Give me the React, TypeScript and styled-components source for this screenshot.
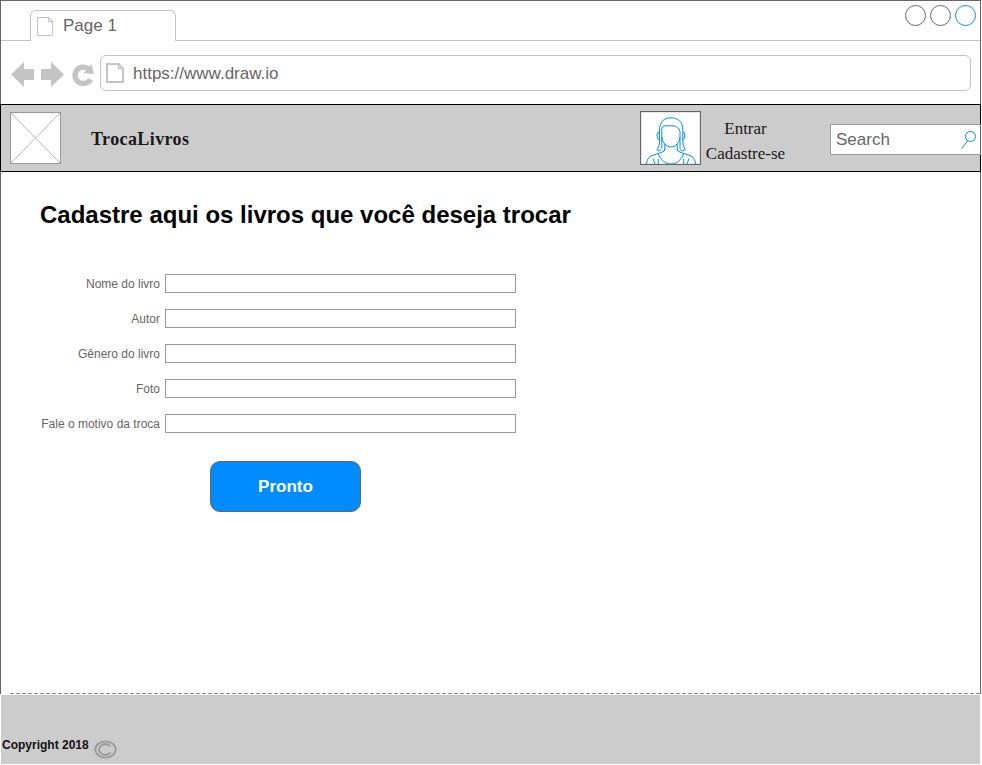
import React from "react";
import styled, { createGlobalStyle } from "styled-components";

const GlobalStyle = createGlobalStyle`
  * { box-sizing: border-box; }
  body {
    margin: 0;
    background: #fff;
    font-family: "Liberation Sans", Arial, sans-serif;
    overflow: hidden;
  }
`;

const Page = styled.div`
  width: 982px;
  height: 765px;
  overflow: hidden;
`;

const Frame = styled.div`
  width: 981px;
  height: 694px;
  border: 1px solid #666;
  border-bottom: 0;
  display: flex;
  flex-direction: column;
`;

const TabStrip = styled.div`
  display: flex;
  align-items: flex-end;
  height: 40px;
  flex: none;
`;

const StripLine = styled.div<{ $width?: number }>`
  ${(p) => (p.$width ? `width: ${p.$width}px;` : "flex: 1;")}
  height: 40px;
  border-bottom: 1px solid #c4c4c4;
`;

const Tab = styled.div`
  display: flex;
  align-items: center;
  width: 146px;
  height: 31px;
  border: 1px solid #c4c4c4;
  border-bottom: 0;
  border-radius: 6px 6px 0 0;
  padding: 0 0 1px 6px;
  gap: 8px;
  color: #666;
  font-size: 17px;
  svg { margin-top: 3px; }
`;

const WindowButtons = styled(StripLine)`
  display: flex;
  justify-content: flex-end;
  gap: 3px;
  padding: 3px 4px 0 0;
`;

const Toolbar = styled.div`
  display: flex;
  height: 63px;
  flex: none;
  padding: 14px 9px 0 9px;
`;

const NavIcons = styled.div`
  width: 90px;
  height: 36px;
`;

const AddressBar = styled.div`
  display: flex;
  align-items: center;
  gap: 9px;
  flex: 1;
  height: 36px;
  border: 1px solid #c4c4c4;
  border-radius: 6px;
  padding: 2px 0 0 5px;
  color: #666;
  font-size: 17px;
  svg { margin-bottom: 2px; }
`;

const SiteHeader = styled.header`
  display: flex;
  flex: none;
  width: 981px;
  height: 68px;
  margin-left: -1px;
  border: 1px solid #000;
  background: #ccc;
  font-family: "Liberation Serif", "Times New Roman", serif;
  color: #1a1a1a;
`;

const Logo = styled.svg`
  flex: none;
  margin: 7px 0 0 9px;
`;

const Brand = styled.div`
  width: 550px;
  flex: none;
  padding-left: 30px;
  font-size: 18px;
  font-weight: bold;
  line-height: 68px;
  letter-spacing: 0.4px;
`;

const Avatar = styled.svg`
  flex: none;
  margin: 6px 0 0 29px;
`;

const Account = styled.nav`
  flex: none;
  width: 90px;
  padding: 11px 1px 0 0;
  display: flex;
  flex-direction: column;
  align-items: center;
  font-size: 17px;
  line-height: 25px;
`;

const SearchBox = styled.div`
  display: flex;
  align-items: center;
  justify-content: space-between;
  flex: none;
  width: 151px;
  height: 31px;
  margin: 19px 0 0 39px;
  border: 1px solid #999;
  border-right-color: #666;
  background: #fff;
  padding: 0 3px 0 5px;
  color: #666;
  font: 17px "Liberation Sans", Arial, sans-serif;
`;

const Main = styled.main`
  flex: 1;
  padding: 28px 0 0 39px;
`;

const Title = styled.h1`
  margin: 0 0 45px;
  color: #000;
  font-size: 24px;
  line-height: 29px;
  white-space: nowrap;
`;

const Form = styled.div`
  display: flex;
  flex-direction: column;
  gap: 16px;
`;

const Field = styled.label`
  display: grid;
  grid-template-columns: 120px 351px;
  grid-template-rows: 19px;
  column-gap: 5px;
  height: 19px;
  color: #666;
  font-size: 12px;
  line-height: 21px;
  text-align: right;
  white-space: nowrap;
`;

const Input = styled.span`
  border: 1px solid #999;
  background: #fff;
`;

const Submit = styled.button`
  display: block;
  width: 151px;
  height: 51px;
  margin: 28px 0 0 170px;
  border: 1px solid #666;
  border-radius: 10px;
  background: #008cff;
  color: #fff;
  font: bold 17px "Liberation Sans", Arial, sans-serif;
  padding: 0;
`;

const Divider = styled.div`
  height: 1px;
  margin-left: 9px;
  background: repeating-linear-gradient(90deg, #aaa 0 1px, #777 1px 3px, #aaa 3px 4px, #fff 4px 6px);
`;

const FrameBody = styled.div`
  display: flex;
  flex-direction: column;
  flex: 1;
`;

const Footer = styled.footer`
  display: flex;
  gap: 5px;
  width: 979px;
  height: 69px;
  margin: 1px 0 0 1px;
  background: #ccc;
  padding: 43px 0 0 1px;
  color: #111;
  font-size: 12px;
  font-weight: bold;
  line-height: 14px;
  svg { margin-top: 1px; }
`;

const PageIcon = ({ bold = false }: { bold?: boolean }) => (
  <svg width="18" height="20" viewBox="0 0 18 20" fill="none" stroke="#c4c4c4" strokeWidth={bold ? 2 : 1}>
    {bold ? (
      <>
        <path d="M1 1H12.5L17 5.5V19H1Z" />
        <path d="M12.5 1V5.5H17" strokeWidth="1.3" />
      </>
    ) : (
      <path d="M.5 .5H11.5L15.5 4.5V18.5H.5ZM11.5 .5V4.5H15.5" />
    )}
  </svg>
);

const Circle = ({ color }: { color: string }) => (
  <svg width="22" height="22">
    <circle cx="11.5" cy="11.5" r="10" fill="none" stroke={color} />
  </svg>
);

const fields = ["Nome do livro", "Autor", "Gênero do livro", "Foto", "Fale o motivo da troca"];

export default function App() {
  return (
    <Page>
      <GlobalStyle />
      <Frame>
        <TabStrip>
          <StripLine $width={29} />
          <Tab>
            <PageIcon />
            Page 1
          </Tab>
          <WindowButtons>
            <Circle color="#666" />
            <Circle color="#666" />
            <Circle color="#008cff" />
          </WindowButtons>
        </TabStrip>
        <Toolbar>
          <NavIcons>
            <svg width="90" height="36" viewBox="10 55 90 36" fill="#c4c4c4">
              <path d="M11 74.5L24 62V69H34V80H24V87Z" />
              <path d="M64 74.5L51 62V69H41V80H51V87Z" />
              <path
                d="M90.5 79.2A8.2 8.2 0 1 1 88.6 69.1"
                fill="none"
                stroke="#c4c4c4"
                strokeWidth="5.4"
              />
              <path d="M91.5 64L93.7 74.2L83.5 73Z" />
            </svg>
          </NavIcons>
          <AddressBar>
            <PageIcon bold />
            https://www.draw.io
          </AddressBar>
        </Toolbar>
        <SiteHeader>
          <Logo width="51" height="52">
            <rect x=".5" y=".5" width="50" height="51" fill="#fff" stroke="#999" />
            <path d="M1 1L50 51M50 1L1 51" stroke="#b8b8b8" />
          </Logo>
          <Brand>TrocaLivros</Brand>
          <Avatar width="61" height="54" viewBox="640 111 61 54" fill="none" stroke="#008cff">
            <rect x="640.5" y="111.5" width="60" height="53" fill="#fff" stroke="#666" strokeWidth="1.3" />
            <path d="M661.5 149Q660 151.5 657.5 150.5Q656.500 149.500 658 148Q659.500 146 659.500 141V130C659.500 122 664 117.800 671 117.800S682.800 122 682.800 130V141Q682.800 146 684.300 148Q685.500 149.500 684.300 150.500Q682 151.500 680.200 149.500" />
            <path d="M661.800 148V128Q662.500 126 665 125.800H673Q678 126 680 131.500V149" />
            <path d="M661.800 137C662.500 143 666.500 147 671 147S679.500 143 680 137" />
            <path d="M659.500 132Q656.800 132 657 135Q657.300 139.500 659.500 140M682.800 132Q685 132 684.800 135Q684.500 139.500 682.800 140M664.800 144V150.500M677.200 144V150.500" />
            <path d="M646.300 164Q647.500 157.500 651 156L661 152.500Q665 151.500 665 149M677 149Q677 151.500 681 152.500L691 156Q694.500 157.500 695.700 164M658.300 153.800C661 160 665 164 671 164S681 160 683.700 153.800M653 158.500L655 164M689 158.500L687 164M658.300 159V164M683.700 159V164" />
          </Avatar>
          <Account>
            <span>Entrar</span>
            <span>Cadastre-se</span>
          </Account>
          <SearchBox>
            Search
            <svg width="16" height="20" viewBox="0 0 16 20" fill="none" stroke="#008cff">
              <circle cx="9.500" cy="6.500" r="5" />
              <path d="M6.500 11L.7 18.500" />
            </svg>
          </SearchBox>
        </SiteHeader>
        <FrameBody>
          <Main>
            <Title>Cadastre aqui os livros que você deseja trocar</Title>
            <Form>
              {fields.map((name) => (
                <Field key={name}>
                  {name}
                  <Input />
                </Field>
              ))}
            </Form>
            <Submit>Pronto</Submit>
          </Main>
          <Divider />
        </FrameBody>
      </Frame>
      <Footer>
        Copyright 2018
        <svg width="23" height="20" viewBox="0 0 23 20" fill="none" stroke="#999" strokeWidth="1.8">
          <ellipse cx="11.500" cy="10.500" rx="10.200" ry="8.200" />
          <path d="M16.500 7.500Q14.500 5 11.500 5C7.500 5.200 5 8 5 10.500S7.500 15.800 11.500 16Q14.500 16 16.500 13.500" />
        </svg>
      </Footer>
    </Page>
  );
}
